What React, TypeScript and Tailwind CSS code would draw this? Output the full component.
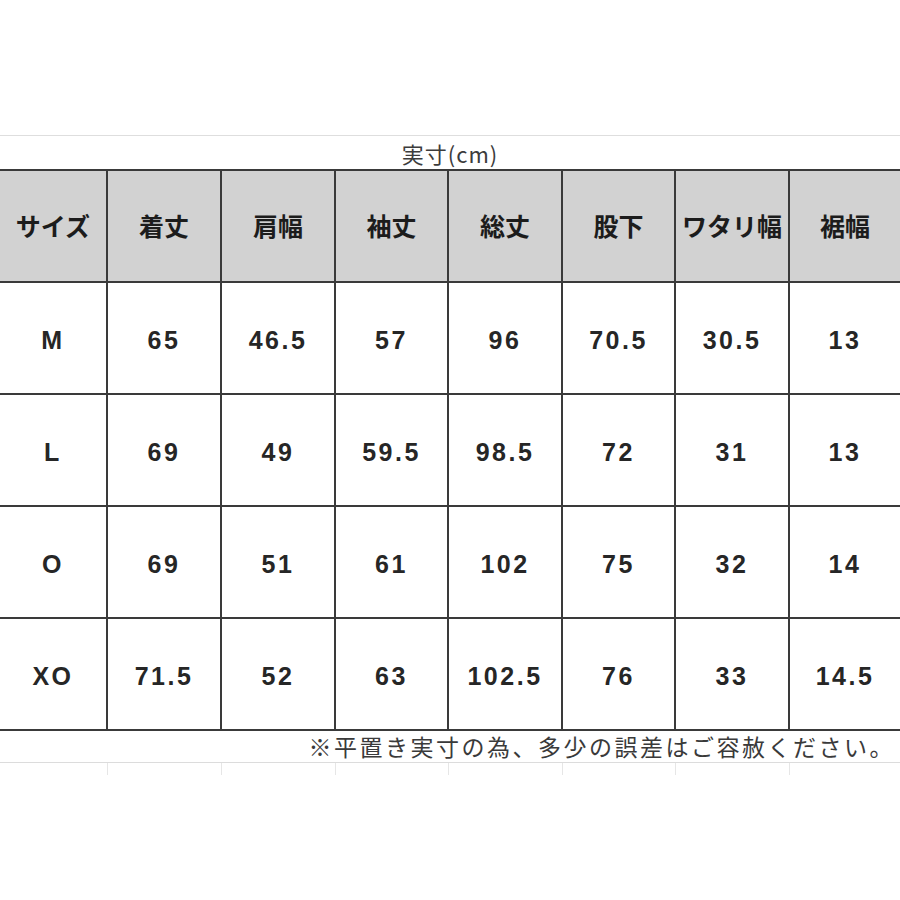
const headers = ["サイズ", "着丈", "肩幅", "袖丈", "総丈", "股下", "ワタリ幅", "裾幅"];

const rows = [
  ["M", "65", "46.5", "57", "96", "70.5", "30.5", "13"],
  ["L", "69", "49", "59.5", "98.5", "72", "31", "13"],
  ["O", "69", "51", "61", "102", "75", "32", "14"],
  ["XO", "71.5", "52", "63", "102.5", "76", "33", "14.5"],
];

const cols = "grid grid-cols-[108px_114px_114px_113px_114px_113px_114px_1fr]";
const jp = { fontFamily: '"Noto Sans CJK JP", "Noto Sans", sans-serif' };
const num = { fontFamily: '"Liberation Sans", Arial, sans-serif' };

export default function App() {
  return (
    <div className="w-[900px] h-[900px] bg-white overflow-hidden">
      <div className="h-[135px]" />

      {/* title row */}
      <div
        className="h-[34px] border-t border-[#dedede] flex items-center justify-center text-[22px] tracking-[1px] text-[#3c3c3c] leading-none"
        style={jp}
      >
        実寸(cm)
      </div>

      {/* header */}
      <div className={`${cols} h-[114px] bg-[#d2d2d2] border-y-2 border-[#3a3a3a]`}>
        {headers.map((h, i) => (
          <div
            key={h}
            className={`flex items-center justify-center text-[25px] font-bold text-[#1c1c1c] ${
              i < headers.length - 1 ? "border-r-2 border-[#3a3a3a]" : ""
            }`}
            style={jp}
          >
            {h}
          </div>
        ))}
      </div>

      {/* body */}
      {rows.map((r) => (
        <div key={r[0]} className={`${cols} h-[112px] border-b-2 border-[#3a3a3a]`}>
          {r.map((v, i) => (
            <div
              key={i}
              className={`flex items-center justify-center pt-[6px] text-[25px] font-bold tracking-[2.5px] text-[#262626] ${
                i < r.length - 1 ? "border-r-2 border-[#3a3a3a]" : ""
              }`}
              style={num}
            >
              {v}
            </div>
          ))}
        </div>
      ))}

      {/* note */}
      <div
        className="h-[32px] border-b border-[#dcdcdc] flex items-center justify-end pr-[5px] text-[23px] tracking-[2.5px] text-[#3a3a3a] leading-none"
        style={jp}
      >
        ※平置き実寸の為、多少の誤差はご容赦ください。
      </div>

      {/* faint grid below */}
      <div className={`${cols} h-[12px]`}>
        {headers.map((h, i) => (
          <div key={h} className={i < headers.length - 1 ? "border-r border-[#e6e6e6]" : ""} />
        ))}
      </div>
    </div>
  );
}
